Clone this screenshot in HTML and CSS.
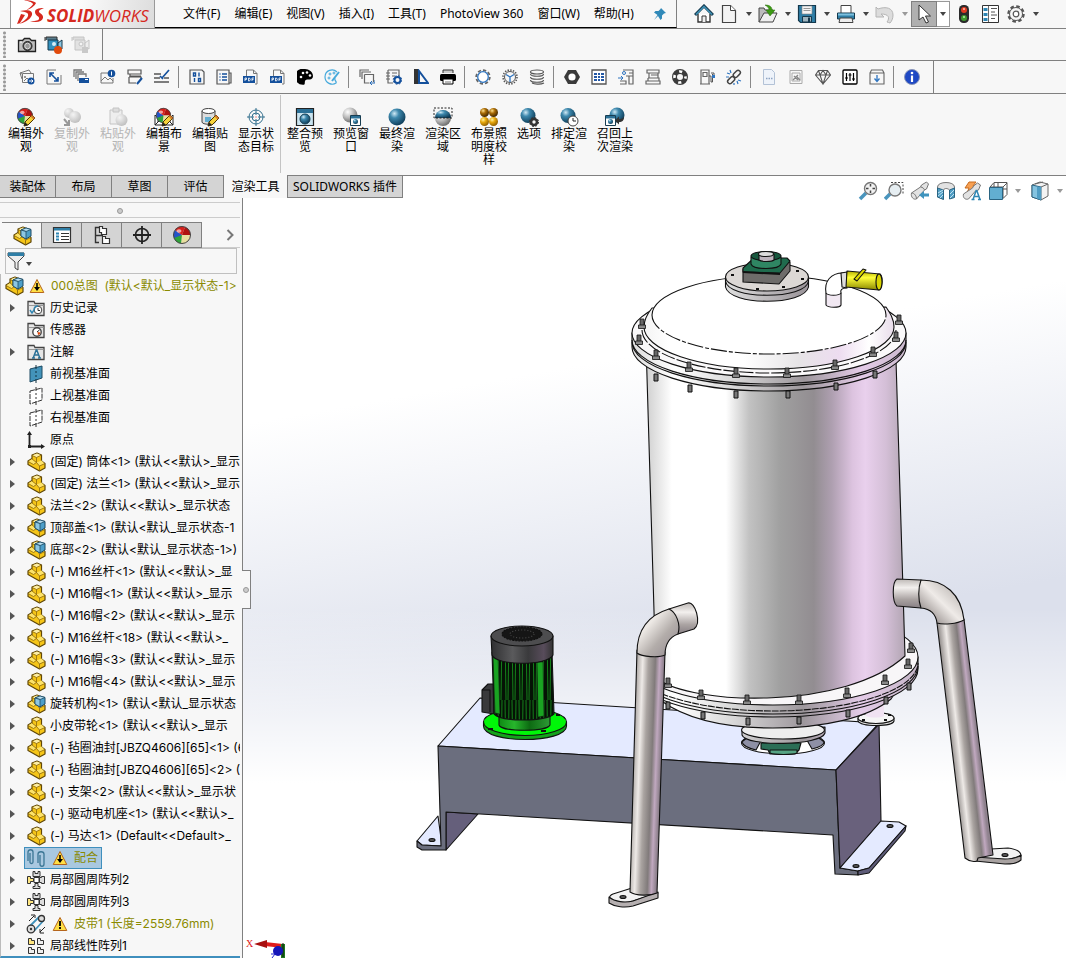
FILE: index.html
```html
<!DOCTYPE html>
<html lang="zh-CN">
<head>
  <meta charset="UTF-8">
  <meta name="viewport" content="width=device-width, initial-scale=1.0">
  <title>SOLIDWORKS - 000总图</title>
  <link rel="stylesheet" href="styles.css">
</head>
<body>

  <!-- shared icons -->
  <svg class="defs" aria-hidden="true">
    <defs>
      <radialGradient id="ballBlue" cx=".35" cy=".3" r=".75"><stop offset="0" stop-color="#cfe9f5"/><stop offset=".35" stop-color="#3d88ad"/><stop offset="1" stop-color="#0d3a55"/></radialGradient>
      <radialGradient id="ballGray" cx=".35" cy=".3" r=".75"><stop offset="0" stop-color="#fff"/><stop offset=".5" stop-color="#bbb"/><stop offset="1" stop-color="#666"/></radialGradient>
      <radialGradient id="ballPale" cx=".35" cy=".3" r=".75"><stop offset="0" stop-color="#f4f4f4"/><stop offset="1" stop-color="#bdbdbd"/></radialGradient>
      <radialGradient id="ballGold" cx=".35" cy=".3" r=".75"><stop offset="0" stop-color="#fff3a0"/><stop offset=".4" stop-color="#e8a90c"/><stop offset="1" stop-color="#8a5a00"/></radialGradient>
      <radialGradient id="ballBrown" cx=".35" cy=".3" r=".75"><stop offset="0" stop-color="#ffe08a"/><stop offset=".4" stop-color="#a86a04"/><stop offset="1" stop-color="#3a2200"/></radialGradient>
    </defs>
    <symbol id="part" viewBox="0 0 20 20">
      <path d="M2 9l4-2.500V3l5-2 4.500 2v6l3.500 2.500v4.500L13.500 19 2 12.500z" fill="#f5c518" stroke="#5f4708" stroke-width="1.200" stroke-linejoin="round"/>
      <path d="M6.500 3.200L11 1.500l4 1.700-4.500 2.300z" fill="#fdeea6"/>
      <path d="M10.500 10.500l5-2 3 3-5 2.500z" fill="#fde36a"/>
      <path d="M2.500 9.200l3.700-2.300 4.100 3.600-3 2z" fill="#fde36a"/>
      <path d="M6 3.500l4.500 2 5-2.500M10.500 5.500v5l3 3.500 5.500-2.500M13.500 14v4.500M6 7l4.500 3.500-3 2L2 9.500" fill="none" stroke="#8a670c" stroke-width=".8"/>
    </symbol>
    <symbol id="asm" viewBox="0 0 20 20">
      <use href="#part"/>
      <path d="M9 4l5-2 5 1.500v6.500l-5 3-5-3z" fill="#4d9fc9" stroke="#1c4a63"/>
      <path d="M9 4l5 1.500 5-2L14 2z" fill="#b9e0f2" stroke="#1c4a63" stroke-width=".8"/>
      <path d="M14 5.500V13l-5-3V4z" fill="#8cc7e3" stroke="#1c4a63" stroke-width=".8"/>
    </symbol>
    <symbol id="warn" viewBox="0 0 16 16">
      <path d="M8 1.500l6.800 13H1.200z" fill="#ffdf45" stroke="#b5651d" stroke-linejoin="round"/>
    </symbol>
    <symbol id="warndown" viewBox="0 0 16 16">
      <use href="#warn"/><path d="M8 5v7" stroke="#000" stroke-width="1.600"/><path d="M5 9h6l-3 4z" fill="#000"/>
    </symbol>
    <symbol id="folder" viewBox="0 0 20 20">
      <path d="M2 17.500V3.500h6l1 2h9v12z" fill="#e6e6e6" stroke="#444" stroke-width="1.300"/><path d="M3 7.500h14.500" stroke="#999"/>
    </symbol>
    <symbol id="plane" viewBox="0 0 20 20">
      <path d="M4 5l12-3v12l-12 4z" fill="#fff" stroke="#333" stroke-dasharray="5 1"/><path d="M10 1v4M10 7v2M10 11v2M10 15v4" stroke="#333"/>
    </symbol>
    <symbol id="circular" viewBox="0 0 20 20">
      <path d="M7 1.500h2v2h3v-2h2v5H7zM7 18.500h7v-2h-2v-3H9v3H7zM13.500 7.500h2v-1h3v7h-3v-1h-2z" fill="#ddd" stroke="#333"/>
      <path d="M1.500 6.500h3v2h3v3h-3v2h-3z" fill="#ffe680" stroke="#333"/><path d="M8 7.500h5v5H8z" fill="#fff" stroke="#333"/>
    </symbol>
    <symbol id="ball4" viewBox="0 0 20 20">
      <circle cx="10" cy="10" r="8.500" fill="#ddd"/><path d="M10 10L3 5A8.500 8.500 0 0 0 3 14.500z" fill="#2554c7"/><path d="M10 10L3 5A8.500 8.500 0 0 1 13 2z" fill="#d8201c"/>
      <path d="M10 10l3-8a8.500 8.500 0 0 1 5.500 8z" fill="#b01310"/><path d="M10 10h8.500a8.500 8.500 0 0 1-9.500 8.500z" fill="#e9dfa0"/><path d="M10 10l-1 8.500A8.500 8.500 0 0 1 2 13z" fill="#2fa33a"/>
      <circle cx="10" cy="10" r="8.500" fill="none" stroke="#444"/><ellipse cx="7" cy="6" rx="2.500" ry="1.800" fill="#fff" opacity=".6"/>
    </symbol>
    <symbol id="pencil" viewBox="0 0 20 20">
      <path d="M8 19l1-4 7-7 3 3-7 7z" fill="#f6d23a" stroke="#4a3200"/><path d="M8 19l1-4 3 3z" fill="#222"/><path d="M14.500 9.500l3 3 1.500-1.500-3-3z" fill="#d27a2c"/>
    </symbol>
    <symbol id="caret" viewBox="0 0 6 4"><path d="M0 0h6L3 4z" fill="currentColor"/></symbol>
    <symbol id="pdf" viewBox="0 0 16 16">
      <path d="M3.500 7V1h7l3.500 3.500V15h-2M10.500 1v3.500H14" fill="none" stroke="#777"/><path d="M0 7h12v7H0z" fill="#14509c"/>
      <path d="M2 12V9h1.500v1.500H2M5.500 9v3h1l.8-1.500L6.500 9zM9 12V9h2M9 10.500h1.500" fill="none" stroke="#fff" stroke-width=".8"/>
    </symbol>
  </svg>

  <header class="titlebar">
    <div class="brand">
      <svg class="ds" viewBox="0 0 30 27" aria-hidden="true">
        <path d="M8 0c5 0 10 1 12 3-1 3-6 6-11 8 5-3 8-6 8-7-1-2-5-3-9-4z" fill="#d6291f"/>
        <path d="M4 11c9-2 13 0 12 4-2 5-8 8-14 9 4-1 9-5 10-8 1-3-2-4-8-5zM5 14l4 1-5 8-3 1z" fill="#d6291f"/>
        <path d="M28 8c-6 0-9 1-9 4 0 4 5 4 4 7-1 2-5 2-9 2 6 2 12 1 13-3 1-4-5-5-4-7 0-1 3-2 5-3z" fill="#d6291f"/>
      </svg>
      <span class="logo"><b>SOLID</b>WORKS</span>
    </div>
    <nav class="menu">
      <a href="#">文件(F)</a>
      <a href="#">编辑(E)</a>
      <a href="#">视图(V)</a>
      <a href="#">插入(I)</a>
      <a href="#">工具(T)</a>
      <a href="#">PhotoView 360</a>
      <a href="#">窗口(W)</a>
      <a href="#">帮助(H)</a>
      <button class="pin" aria-label="固定"><svg class="s16" viewBox="0 0 16 16"><path d="M9 2l5 5-2 .5-2 2v3L8.500 14 6 10l-4 4 3.500-5L2 6.500 3.500 5h3l2-2z" fill="#3189b8"/></svg></button>
    </nav>
    <div class="quick">
      <button class="home" aria-label="主页"><svg class="s20" viewBox="0 0 20 20"><path d="M4 10v8h12v-8" fill="#fff" stroke="#333" stroke-width="1.400"/><path d="M1 11l9-9 9 9" fill="none" stroke="#173d52" stroke-width="3"/><path d="M2 10.500l8-8 8 8" fill="none" stroke="#3f95bb" stroke-width="1.300"/><path d="M8 18v-6h4v6" fill="#eee" stroke="#333"/></svg></button>
      <button aria-label="新建"><svg class="s20" viewBox="0 0 20 20"><path d="M3.500 1.500h8l5 5v12h-13z" fill="#f3f3f3" stroke="#444" stroke-width="1.200"/><path d="M11.500 1.500v5h5" fill="#fff" stroke="#444"/></svg></button>
      <button class="drop" aria-label="更多"><svg><use href="#caret"/></svg></button>
      <button aria-label="打开"><svg class="s20" viewBox="0 0 20 20"><path d="M1 18V4h5l1 2h8v3" fill="#bbb" stroke="#444"/><path d="M1 18L6 9h13l-4 9z" fill="#efefef" stroke="#444"/><path d="M7 1c5 0 7 2 7 5h3l-5 6-4-6h3c0-2-1-3-4-5z" fill="#3c9a14" stroke="#2a6e0c" stroke-width=".5"/></svg></button>
      <button class="drop" aria-label="更多"><svg><use href="#caret"/></svg></button>
      <button aria-label="保存"><svg class="s20" viewBox="0 0 20 20"><path d="M1.500 1.500h17v17h-15l-2-2z" fill="#2f7ea6" stroke="#14384c" stroke-width="1.200"/><path d="M5 2h10v8H5z" fill="#f4f4f4" stroke="#888" stroke-width=".6"/><path d="M6.500 4.500h7M6.500 6.500h7" stroke="#999"/><path d="M5.500 12.500h9V18h-9z" fill="#9fb4be" stroke="#14384c"/><path d="M11 13.500h2V18h-2z" fill="#14384c"/></svg></button>
      <button class="drop" aria-label="更多"><svg><use href="#caret"/></svg></button>
      <button aria-label="打印"><svg class="s20" viewBox="0 0 20 20"><path d="M5 9V1.500h10V9" fill="#fff" stroke="#444"/><path d="M1.500 9h17v6h-17z" fill="#2f7ea6" stroke="#14384c"/><path d="M2 9.500h16v2H2z" fill="#7cc0df"/><path d="M4 14h12l1 4.500H3z" fill="#eee" stroke="#444"/></svg></button>
      <button class="drop" aria-label="更多"><svg><use href="#caret"/></svg></button>
      <button aria-label="撤消"><svg class="s20" viewBox="0 0 20 20"><path d="M1 3l2 2c8-3 15-1 15 6 0 3-1 6-3 8-1 0-2-1-3-1 3-4 2-8-6-8l3 3H1z" fill="#dcdcdc" stroke="#b5b5b5"/></svg></button>
      <button class="drop pale" aria-label="更多"><svg><use href="#caret"/></svg></button>
      <button class="picked" aria-label="选择"><svg class="s20" viewBox="0 0 20 20"><path d="M5 1v15l4-3 3 6 2.500-1-3-6h5z" fill="#fff" stroke="#333"/></svg></button>
      <button class="drop boxed" aria-label="更多"><svg><use href="#caret"/></svg></button>
      <button class="light" aria-label="重建"><svg class="s20" viewBox="0 0 20 20"><rect x="5" y="1" width="10" height="18" rx="4.500" fill="#2b2b2b"/><circle cx="10" cy="6" r="3" fill="#e23b22"/><circle cx="10" cy="14" r="3" fill="#3f9a2e"/><circle cx="10" cy="5" r="1" fill="#ffc5b5"/><circle cx="10" cy="13" r="1" fill="#b9f0a8"/></svg></button>
      <button aria-label="文件属性"><svg class="s20" viewBox="0 0 20 20"><path d="M2.500 1.500h16v17h-16z" fill="#fff" stroke="#333"/><path d="M8.500 2v16" stroke="#666"/><path d="M3.500 4h4v3h-4zM3.500 9h4v3h-4zM3.500 14h4v3h-4z" fill="#2f86b3"/><path d="M11 4.500h6M11 8h4M11 11h6M11 14.500h4" stroke="#555"/></svg></button>
      <button aria-label="选项"><svg class="s20" viewBox="0 0 20 20"><circle cx="10" cy="10" r="7.500" fill="none" stroke="#555" stroke-width="2.500" stroke-dasharray="3.500 2.390"/><circle cx="10" cy="10" r="6.500" fill="#f7f7f7" stroke="#555"/><circle cx="10" cy="10" r="2.800" fill="#fff" stroke="#555" stroke-width="1.200"/></svg></button>
      <button class="drop" aria-label="更多"><svg><use href="#caret"/></svg></button>
    </div>
  </header>

  <div class="bar capture">
    <div class="tools">
      <span class="grip"></span>
      <button aria-label="捕获图像"><svg class="s20" viewBox="0 0 20 20"><path d="M1.500 5.500h4l2-2h5l2 2h4v11h-17z" fill="#bdbdbd" stroke="#222" stroke-width="1.300"/><circle cx="10.500" cy="11" r="4.500" fill="#555" stroke="#222"/><circle cx="10.500" cy="11" r="2.800" fill="#999" stroke="#ddd"/><path d="M3 7h2" stroke="#fff"/></svg></button>
      <button aria-label="录制视频"><svg class="s20" viewBox="0 0 20 20"><path d="M2 5V2h11v3M1 2v4" fill="#5a7d8d" stroke="#333"/><path d="M4 5h10v10H4z" fill="#3390bd" stroke="#14384c"/><path d="M14 8l4-3v9l-4-2z" fill="#8cc7e3" stroke="#14384c"/><circle cx="10" cy="9" r="2" fill="#d5ecf6"/><circle cx="14" cy="15" r="4" fill="#e04a0c"/></svg></button>
      <button aria-label="停止录制"><svg class="s20" viewBox="0 0 20 20"><path d="M2 5V2h11v3M1 2v4" fill="#ddd" stroke="#c4c4c4"/><path d="M4 5h10v10H4z" fill="#e2e2e2" stroke="#c4c4c4"/><path d="M14 8l4-3v9l-4-2z" fill="#eee" stroke="#c4c4c4"/><circle cx="10" cy="9" r="2" fill="#f4f4f4" stroke="#c4c4c4"/><path d="M11 12h6v6h-6z" fill="#c9c9c9"/></svg></button>
    </div>
  </div>

  <div class="bar plugin">
    <div class="tools">
      <span class="grip"></span>
      <button aria-label="图片"><svg class="s16" viewBox="0 0 16 16"><path d="M3 5L1 4l9-3 2 3M1 4l2 6M3.500 4.500h11v9h-11zM5 12l3-3 3 3" fill="none" stroke="#777"/><circle cx="6" cy="8" r="1" fill="#777"/><circle cx="12" cy="12" r="3.500" fill="#14509c"/><path d="M10 12h4M12.500 10.500L14 12l-1.500 1.500" fill="none" stroke="#fff"/></svg></button>
      <button aria-label="缩放"><svg class="s16" viewBox="0 0 16 16"><path d="M10 1H1v14h14V6" fill="none" stroke="#777"/><path d="M4 4l8 8M4 8V4h4M12 8v4H8" fill="none" stroke="#14509c" stroke-width="1.600"/></svg></button>
      <button aria-label="批量"><svg class="s16" viewBox="0 0 16 16"><path d="M1 8V1h8M3 10V3h8M5 12V5h8v3" fill="none" stroke="#777" stroke-width="1.300"/><path d="M6 9h10v5H6z" fill="#14509c"/><path d="M12 10.500h3" stroke="#fff"/></svg></button>
      <button aria-label="截图"><svg class="s16" viewBox="0 0 16 16"><path d="M8 4H1v10h12V9M1 12l4-4 3 3 2-2 3 3" fill="none" stroke="#777"/><circle cx="11.500" cy="4.500" r="3.800" fill="#14509c"/><path d="M11.500 2.500v4" stroke="#fff"/></svg></button>
      <button aria-label="编辑"><svg class="s16" viewBox="0 0 16 16"><path d="M1 1h13v4H1zM3 5v2h11M2 8h12v2M2 8v6h7" fill="none" stroke="#555" stroke-width="1.200"/><path d="M10 15l5-6" stroke="#14509c" stroke-width="2"/></svg></button>
      <button aria-label="公差"><svg class="s16" viewBox="0 0 16 16"><path d="M0 5h7M0 9h6M10 9h5M0 13h15" stroke="#555" stroke-width="1.300"/><path d="M8 9l7-8M6 7l3 3" stroke="#14509c" stroke-width="1.700"/></svg></button>
      <i class="sep"></i>
      <button aria-label="属性"><svg class="s16" viewBox="0 0 16 16"><path d="M1 1h12l2 2v12H1z" fill="none" stroke="#555" stroke-width="1.200"/><path d="M4.500 4h2v3h-2zM10 3.500v4M9.500 9.500h2v3h-2zM5.500 9v4" fill="none" stroke="#14509c" stroke-width="1.400"/></svg></button>
      <button aria-label="清单"><svg class="s16" viewBox="0 0 16 16"><path d="M1 1h12v14H1zM13 4h2v10h-2" fill="none" stroke="#555" stroke-width="1.200"/><path d="M3.500 5h1M3.500 8h1M3.500 11h1M6 5h5M6 8h5M6 11h5" stroke="#14509c" stroke-width="1.300"/></svg></button>
      <button aria-label="导出PDF"><svg class="s16"><use href="#pdf"/></svg></button>
      <button aria-label="批量PDF"><svg class="s16"><use href="#pdf"/></svg></button>
      <button aria-label="颜色"><svg class="s16" viewBox="0 0 16 16"><path d="M8 0a8 8 0 1 0-2 15.700c3 .3 1-3 2.500-4.500S16 12 16 7C16 3 12 0 8 0z" fill="#000"/><g fill="#f7f7f7"><circle cx="4" cy="8" r="1.300"/><circle cx="6" cy="4" r="1.300"/><circle cx="10" cy="3.500" r="1.300"/><circle cx="13" cy="6.500" r="1.300"/></g></svg></button>
      <button aria-label="调色"><svg class="s16" viewBox="0 0 16 16"><path d="M13 3C9-1 1 1 1 8c0 6 7 9 11 6 1-2-2-2-1-5" fill="none" stroke="#45a9dc" stroke-width="1.200"/><path d="M8 12l7-9" stroke="#45a9dc" stroke-width="2"/><g fill="none" stroke="#45a9dc"><circle cx="5" cy="9" r="1"/><circle cx="6" cy="5" r="1"/><circle cx="10" cy="4" r="1"/></g></svg></button>
      <i class="sep"></i>
      <button aria-label="复制"><svg class="s16" viewBox="0 0 16 16"><path d="M1 8V1h9M3 10V3h9M5.500 5.500h9V13M5.500 5.500V14h5" fill="none" stroke="#666" stroke-width="1.200"/><path d="M16 11v3h-5M13 12l-2 2 2 2" fill="none" stroke="#2a6cb5"/></svg></button>
      <button aria-label="设置"><svg class="s16" viewBox="0 0 16 16"><path d="M2 1h11v6M2 1v13h5M0 4h4M0 7h4M0 10h4M6 4h5M6 7h3" fill="none" stroke="#666" stroke-width="1.200"/><circle cx="11.500" cy="11" r="3" fill="none" stroke="#14509c" stroke-width="2"/><circle cx="11.500" cy="11" r="4.300" fill="none" stroke="#14509c" stroke-dasharray="1.700 1.700"/></svg></button>
      <button aria-label="测量"><svg class="s16" viewBox="0 0 16 16"><path d="M1 0h4v15H1z" fill="#333"/><path d="M6 2v12h9z" fill="none" stroke="#14509c" stroke-width="2"/></svg></button>
      <button aria-label="批量打印"><svg class="s16" viewBox="0 0 16 16"><path d="M3 4V1h10v3" fill="#ccc" stroke="#333"/><rect y="5" width="16" height="7" rx="1.500" fill="#000"/><path d="M3 10h10v5H3z" fill="#fff" stroke="#000"/><path d="M5 13h6" stroke="#777"/></svg></button>
      <i class="sep"></i>
      <button aria-label="齿轮"><svg class="s16" viewBox="0 0 16 16"><circle cx="8" cy="8" r="6.800" fill="none" stroke="#666" stroke-width="1.800" stroke-dasharray="3.300 2"/><circle cx="8" cy="8" r="5.300" fill="#fff" stroke="#2f75c0" stroke-width="1.300"/></svg></button>
      <button aria-label="链轮"><svg class="s16" viewBox="0 0 16 16"><circle cx="8" cy="8" r="7" fill="none" stroke="#555" stroke-width="1.600" stroke-dasharray="1.400 1.350"/><circle cx="8" cy="8" r="5.500" fill="none" stroke="#555"/><path d="M8 8v5M8 8L4 5.500M8 8l4-2.500" stroke="#2f75c0" stroke-width="1.300"/></svg></button>
      <button aria-label="弹簧"><svg class="s16" viewBox="0 0 16 16"><g fill="none" stroke="#555" stroke-width="1.200"><ellipse cx="8" cy="3" rx="6.500" ry="2"/><path d="M1.500 5c0 3 13 3 13 0M1.500 8c0 3 13 3 13 0M1.500 11c0 3 13 3 13 0M15 14c-4 2-10 1-12 0"/></g></svg></button>
      <i class="sep"></i>
      <button aria-label="螺母"><svg class="s16" viewBox="0 0 16 16"><path d="M4 1h8l4 7-4 7H4L0 8z" fill="#3b3b3b"/><circle cx="8" cy="8" r="3.600" fill="#fff"/></svg></button>
      <button aria-label="表格"><svg class="s16" viewBox="0 0 16 16"><path d="M1 1h14v14H1z" fill="#fff" stroke="#555" stroke-width="1.300"/><path d="M3 5h3M7 5h2M10 5h3M3 8h3M7 8h2M10 8h3M3 11h3M7 11h2M10 11h3" stroke="#2559a5" stroke-width="2"/></svg></button>
      <button aria-label="型材"><svg class="s16" viewBox="0 0 16 16"><path d="M5 1h10v14h-4V7H8M2 12h6v3H2M15 4h-4M15 7h-4" fill="none" stroke="#666" stroke-width="1.200"/><circle cx="6" cy="4" r="1.500" fill="none" stroke="#2f75c0"/><path d="M0 9h5M3 7l2 2-2 2" fill="none" stroke="#2f75c0"/></svg></button>
      <button aria-label="轴承座"><svg class="s16" viewBox="0 0 16 16"><path d="M2 1h12v3H2zM4 4v5M13 4v5M3 9h11v3M1 12h14v3H1zM3 9v3M6 6h7" fill="none" stroke="#666" stroke-width="1.200"/></svg></button>
      <button aria-label="帮助圈"><svg class="s16" viewBox="0 0 16 16"><circle cx="8" cy="8" r="5.500" fill="none" stroke="#3b3b3b" stroke-width="5"/><circle cx="8" cy="8" r="5.500" fill="none" stroke="#fff" stroke-width="2.600" stroke-dasharray="3.200 5.440" stroke-dashoffset="1.600"/></svg></button>
      <button aria-label="加注"><svg class="s16" viewBox="0 0 16 16"><path d="M2 15V1h8v14zM4 3.500h4v4H4zM1 15h10" fill="none" stroke="#666" stroke-width="1.200"/><path d="M10 7h2v6h1.500V5M12 4h3v4h-2" fill="none" stroke="#555"/><path d="M13 6h3v3h-3z" fill="#2f75c0"/></svg></button>
      <button aria-label="断开链接"><svg class="s16" viewBox="0 0 16 16"><g fill="none" stroke="#444" stroke-width="1.500"><rect x="7" y="2.500" width="8" height="4.500" rx="2.200" transform="rotate(-45 11 5)"/><rect x="1" y="9" width="8" height="4.500" rx="2.200" transform="rotate(-45 5 11)"/></g><path d="M4 1l1 3M1 4l3 1M0 8h3M15 12l-3-1M12 15l-1-3M8 16v-2" stroke="#2f75c0" stroke-width="1.200"/></svg></button>
      <i class="sep"></i>
      <button aria-label="文档"><svg class="s16" viewBox="0 0 16 16"><path d="M2.500.500h8l3 3v12h-11z" fill="#eef3fa" stroke="#b3c2d6"/><path d="M5 9.500h1.500M7.500 9.500H9M10 9.500h1.500" stroke="#8ea4c3" stroke-width="1.500"/></svg></button>
      <button aria-label="预览"><svg class="s16" viewBox="0 0 16 16"><path d="M2 1.500h12v13H2zM4 4h8v8H4z" fill="none" stroke="#aaa"/><path d="M5 11l5-5M6 7l4 4M9 8l3 3" stroke="#888" stroke-width="1.400"/></svg></button>
      <button aria-label="宝石"><svg class="s16" viewBox="0 0 16 16"><path d="M3.500 1.500h9L15.500 6 8 15 .5 6zM.5 6h15M3.500 1.500L5 6l3 9 3-9 1.500-4.500M5 6l3-4.500L11 6" fill="none" stroke="#555" stroke-width="1.100"/></svg></button>
      <button aria-label="参数"><svg class="s16" viewBox="0 0 16 16"><rect x="1" y="1" width="14" height="14" rx="1" fill="#fff" stroke="#000" stroke-width="1.300"/><path d="M4.500 4v8M8 4v8M11.500 4v8M3 9h3M6.500 6h3M10 10h3" stroke="#000" stroke-width="1.200"/></svg></button>
      <button aria-label="下载"><svg class="s16" viewBox="0 0 16 16"><path d="M1 4h14v11H1zM1 4l1.500-3h11L15 4" fill="none" stroke="#666" stroke-width="1.100"/><path d="M8 6v6M5.500 9.500L8 12.500l2.500-3" fill="none" stroke="#2f75c0" stroke-width="1.300"/></svg></button>
      <i class="sep"></i>
      <button aria-label="关于"><svg class="s16" viewBox="0 0 16 16"><circle cx="8" cy="8" r="7.500" fill="#1f49c4" stroke="#8a96b8"/><circle cx="8" cy="4" r="1.300" fill="#fff"/><path d="M8 6.500V13" stroke="#fff" stroke-width="2.200"/></svg></button>
    </div>
  </div>

  <div class="ribbon">
    <button><svg class="s20" viewBox="0 0 20 20"><use href="#ball4" width="18" height="18"/><use href="#pencil" width="20" height="20"/></svg>编辑外观</button>
    <button disabled><svg class="s20" viewBox="0 0 20 20"><circle cx="7" cy="6" r="5" fill="url(#ballPale)"/><circle cx="13" cy="10" r="6" fill="url(#ballPale)"/><path d="M2 12l5 6M7 13v5H2" fill="none" stroke="#999" stroke-width="2"/></svg>复制外观</button>
    <button disabled><svg class="s20" viewBox="0 0 20 20"><path d="M2 3h12v14H2z" fill="#eee" stroke="#c4c4c4"/><path d="M5 1h6v4H5z" fill="#ddd" stroke="#c4c4c4"/><circle cx="13.500" cy="13" r="6" fill="url(#ballPale)"/></svg>粘贴外观</button>
    <button><svg class="s20" viewBox="0 0 20 20"><path d="M1 18V8l3 3v4zM19 18V8l-3 3v4zM1 18l4-4h10l4 4z" fill="#fff" stroke="#222"/><use href="#ball4" x="1" width="17" height="17"/><use href="#pencil" width="20" height="20"/></svg>编辑布景</button>
    <button><svg class="s20" viewBox="0 0 20 20"><path d="M2 4v11c0 3 13 3 13 0V4" fill="#ddd" stroke="#444"/><ellipse cx="8.500" cy="4" rx="6.500" ry="2.500" fill="#fff" stroke="#444"/><path d="M5 10h6v5H5z" fill="#62aed1"/><use href="#pencil" width="20" height="20"/></svg>编辑贴图</button>
    <button><svg class="s20" viewBox="0 0 20 20"><g fill="none" stroke="#34708e"><circle cx="10" cy="10" r="7"/><circle cx="10" cy="10" r="4"/><path d="M10 1v7M10 12v7M1 10h7M12 10h7" /></g><path d="M9.500 9.500h1v1h-1z" fill="#e22"/></svg>显示状态目标</button>
    <i class="line"></i>
    <button><svg class="s20" viewBox="0 0 20 20"><path d="M1.500 1.500h17v17h-17z" fill="#c9e3ef" stroke="#222" stroke-width="1.200"/><path d="M2 2h16v4H2z" fill="#2b7096"/><circle cx="10" cy="12" r="5" fill="url(#ballBlue)" stroke="#173d52"/></svg>整合预览</button>
    <button><svg class="s20" viewBox="0 0 20 20"><circle cx="9" cy="8" r="7.500" fill="url(#ballGray)"/><path d="M9.500 8.500h10v10h-10z" fill="#fff" stroke="#173d52"/><path d="M10 9h9v2.500h-9z" fill="#2b7096"/><circle cx="14.500" cy="14.500" r="2.500" fill="url(#ballBlue)"/></svg>预览窗口</button>
    <button><svg class="s20" viewBox="0 0 20 20"><circle cx="10" cy="10" r="8.500" fill="url(#ballBlue)"/></svg>最终渲染</button>
    <button><svg class="s20" viewBox="0 0 20 20"><circle cx="10" cy="11" r="8" fill="url(#ballGray)"/><path d="M2 11a8 8 0 0 1 16 0z" fill="url(#ballBlue)"/><path d="M1 1h18v10H1z" fill="none" stroke="#222" stroke-dasharray="2 1.500"/></svg>渲染区域</button>
    <button><svg class="s20" viewBox="0 0 20 20"><circle cx="5.500" cy="5.500" r="4.500" fill="url(#ballBrown)"/><circle cx="14.500" cy="5.500" r="4.500" fill="url(#ballBrown)"/><circle cx="5.500" cy="14.500" r="4.500" fill="url(#ballGold)"/><circle cx="14.500" cy="14.500" r="4.500" fill="url(#ballGold)"/></svg>布景照明度校样</button>
    <button class="narrow"><svg class="s20" viewBox="0 0 20 20"><circle cx="9" cy="8.500" r="7.500" fill="url(#ballBlue)"/><circle cx="15" cy="15" r="3" fill="#f7f7f7" stroke="#333" stroke-width="2.600"/><circle cx="15" cy="15" r="4.500" fill="none" stroke="#333" stroke-dasharray="2 1.500"/></svg>选项</button>
    <button><svg class="s20" viewBox="0 0 20 20"><circle cx="9" cy="8.500" r="7.500" fill="url(#ballBlue)"/><circle cx="14" cy="14" r="5" fill="#fff" stroke="#444"/><path d="M14 11v3h3" fill="none" stroke="#222"/></svg>排定渲染</button>
    <button><svg class="s20" viewBox="0 0 20 20"><circle cx="12" cy="8" r="7.500" fill="url(#ballBlue)"/><path d="M.5 8.500h10v10H.5z" fill="#fff" stroke="#173d52"/><path d="M1 9h9v2.500H1z" fill="#2b7096"/><circle cx="5.500" cy="14.500" r="2.500" fill="url(#ballBlue)"/><path d="M19 10c0 4-2 5-5 5v2.500l-4-4 4-4V12c2 0 3 0 5-2z" fill="#333"/></svg>召回上次渲染</button>
  </div>

  <div class="tabrow">
    <div class="tabs">
      <button>装配体</button>
      <button>布局</button>
      <button>草图</button>
      <button>评估</button>
      <button class="current">渲染工具</button>
      <button class="wide">SOLIDWORKS 插件</button>
    </div>
    <div class="headsup">
      <button aria-label="整屏显示全图"><svg class="s20" viewBox="0 0 20 20"><path d="M2 18l6-6" stroke="#4a95bd" stroke-width="3.500"/><circle cx="12.500" cy="7.500" r="6" fill="#f1f1f1" stroke="#777" stroke-width="1.400"/><path d="M12.500 3v2.500M12.500 9.500V12M8 7.500h2.500M14.500 7.500H17" stroke="#444" stroke-width="1.500"/></svg></button>
      <button aria-label="局部放大"><svg class="s20" viewBox="0 0 20 20"><path d="M7 1.500h12v12" fill="none" stroke="#444" stroke-dasharray="2 1.500"/><path d="M1 18l5-5" stroke="#4a95bd" stroke-width="3.500"/><circle cx="11" cy="9" r="6" fill="#e6eef2" stroke="#777" stroke-width="1.400"/></svg></button>
      <button aria-label="上一视图"><svg class="s20" viewBox="0 0 20 20"><path d="M1.500 12l9-6 1-2 5-3 2 2-2 5-2 1-8 9c-3 1-6-2-5-6z" fill="#e2e2e2" stroke="#777"/><path d="M1.500 12c3 0 5 3 5 6M10.500 6c2 0 4 2 4 3" fill="none" stroke="#777"/><path d="M9 14l5-4v2.500h5v3h-5V18z" fill="#3f93bd"/></svg></button>
      <button aria-label="剖面视图"><svg class="s20" viewBox="0 0 20 20"><path d="M1.500 6c0-6 17-6 17 0v9l-5 2V9c-2-2-5-2-6 0v9l-6-2z" fill="#e2e2e2" stroke="#777"/><path d="M1.500 7l6 2v9.500l-6-2.500zM13.500 9l5-2v9.500l-5 1.500z" fill="#4f9dc4" stroke="#2a6482"/><path d="M2 12l5-3M2 15l5-4M4 17l3-3M14 13l4-4M14 17l4-4" stroke="#bfe2f2"/></svg></button>
      <button aria-label="动态注解视图"><svg class="s20" viewBox="0 0 20 20"><path d="M7 1h7l-3 4h3l-9 7 2-5H3z" fill="#f7a052" stroke="#c66a1c"/><path d="M1.500 13l9-6 1-2 4-3 3 2-2 5-3 1-7 8c-3 1-6-1-5-5z" fill="#e2e2e2" stroke="#777"/><path d="M9.500 18.500h3M16 18.500h3M11 18.500l3.200-9h.6l3.200 9M12.200 15.500h4.500" fill="none" stroke="#2f86b3" stroke-width="1.500"/></svg></button>
      <button aria-label="视图定向"><svg class="s20" viewBox="0 0 20 20"><path d="M6 1.500h13v12l-4 4V6H2z" fill="#fff" stroke="#555"/><path d="M15 6l4-4M10 2v8M6 2v4M19 8h-6" stroke="#555"/><path d="M1.500 6.500h13v12h-13z" fill="#62aed1" stroke="#2a6482"/></svg></button>
      <button class="drop pale" aria-label="更多"><svg><use href="#caret"/></svg></button>
      <button class="style" aria-label="显示样式"><svg class="s20" viewBox="0 0 20 20"><path d="M2 4l8-3 8 2v12l-7 4-9-3z" fill="#f3f3f3" stroke="#666"/><path d="M2 4l9 2v13l-9-3z" fill="#84c3e0" stroke="#2a6482"/><path d="M5 3l8-2M11 6l7-3" stroke="#666"/><path d="M7 5.500l4 .5v13l-4-1.500z" fill="#4f9dc4"/></svg></button>
      <button class="drop pale" aria-label="更多"><svg><use href="#caret"/></svg></button>
    </div>
  </div>

  <main>
    <aside>
      <div class="handle"><span></span></div>
      <div class="panetabs">
        <button class="current" aria-label="设计树"><svg class="s20"><use href="#asm"/></svg></button>
        <button aria-label="属性"><svg class="s20" viewBox="0 0 20 20"><path d="M1.500 2.500h17v15h-17z" fill="#fff" stroke="#333" stroke-width="1.200"/><path d="M2 3h16v2.500H2z" fill="#2f7ea6"/><path d="M4 8.500h3M4 11.500h3M4 14.500h3" stroke="#2f86b3" stroke-width="2"/><path d="M9 8.500h8M9 11.500h8M9 14.500h8" stroke="#333"/></svg></button>
        <button aria-label="配置"><svg class="s20" viewBox="0 0 20 20"><path d="M7 2.500H3.500v15H7M3.500 10.500H11" fill="none" stroke="#333" stroke-width="1.400"/><path d="M7.500 1.500h3v2h4v6h-5v-2h-2zM10.500 11.500h3v2h4v5h-7z" fill="#fff" stroke="#333" stroke-width="1.200"/></svg></button>
        <button aria-label="尺寸"><svg class="s20" viewBox="0 0 20 20"><circle cx="10" cy="10" r="6.500" fill="none" stroke="#222" stroke-width="1.600"/><path d="M10 1v18M1 10h18" stroke="#222" stroke-width="1.800"/></svg></button>
        <button aria-label="外观"><svg class="s20"><use href="#ball4"/></svg></button>
        <button class="next" aria-label="下一个"><svg viewBox="0 0 8 12"><path d="M1.500 1l5 5-5 5" fill="none" stroke="#777" stroke-width="2"/></svg></button>
      </div>
      <label class="filter">
        <svg class="s20" viewBox="0 0 20 20"><path d="M2 2h16v3l-6 6v8l-3-2v-6L2 5z" fill="#eee" stroke="#444"/><path d="M2 1.500h16v3.500H2z" fill="#2f7ea6"/></svg>
        <svg class="tri"><use href="#caret"/></svg>
        <input type="text" aria-label="过滤器">
      </label>
      <ul class="tree">
        <li class="root alert"><svg class="s20"><use href="#asm"/></svg><svg class="s16"><use href="#warndown"/></svg><span>000总图&nbsp; (默认&lt;默认_显示状态-1&gt;</span></li>
        <li class="more"><svg class="s20" viewBox="0 0 20 20"><use href="#folder"/><circle cx="12" cy="12" r="3.800" fill="#fff" stroke="#444"/><path d="M12 10v2.500h2" fill="none" stroke="#333"/><path d="M4 12l2 3 2-3c0-3 2-4 4-4" fill="none" stroke="#2f86b3" stroke-width="1.400"/></svg><span>历史记录</span></li>
        <li><svg class="s20" viewBox="0 0 20 20"><use href="#folder"/><circle cx="11" cy="12" r="4.200" fill="#fff" stroke="#444" stroke-width="1.400"/><path d="M11 12l2.500-2" stroke="#222"/><path d="M12 15a3 3 0 0 0 2.500-2.500L11.500 12z" fill="#e04a0c"/></svg><span>传感器</span></li>
        <li class="more"><svg class="s20" viewBox="0 0 20 20"><use href="#folder"/><path d="M6 16h3M12 16h3M7.200 16l3-8h.6l3 8M8.500 13h4" fill="none" stroke="#2b7096" stroke-width="1.500"/></svg><span>注解</span></li>
        <li><svg class="s20" viewBox="0 0 20 20"><path d="M4 5l12-3v12l-12 4z" fill="#4393ba" stroke="#1c4a63"/><path d="M10 1v4M10 7v2M10 11v2M10 15v4" stroke="#12303f"/></svg><span>前视基准面</span></li>
        <li><svg class="s20"><use href="#plane"/></svg><span>上视基准面</span></li>
        <li><svg class="s20"><use href="#plane"/></svg><span>右视基准面</span></li>
        <li><svg class="s20" viewBox="0 0 20 20"><path d="M3.500 3v13.500H17" fill="none" stroke="#222" stroke-width="1.800"/><path d="M1 5l2.500-4L6 5zM15 14l4 2.500-4 2.500zM2 15h3v3H2z" fill="#222"/></svg><span>原点</span></li>
        <li class="more"><svg class="s20"><use href="#part"/></svg><span>(固定) 筒体&lt;1&gt; (默认&lt;&lt;默认&gt;_显示</span></li>
        <li class="more"><svg class="s20"><use href="#part"/></svg><span>(固定) 法兰&lt;1&gt; (默认&lt;&lt;默认&gt;_显示</span></li>
        <li class="more"><svg class="s20"><use href="#part"/></svg><span>法兰&lt;2&gt; (默认&lt;&lt;默认&gt;_显示状态</span></li>
        <li class="more"><svg class="s20"><use href="#asm"/></svg><span>顶部盖&lt;1&gt; (默认&lt;默认_显示状态-1</span></li>
        <li class="more"><svg class="s20"><use href="#asm"/></svg><span>底部&lt;2&gt; (默认&lt;默认_显示状态-1&gt;)</span></li>
        <li class="more"><svg class="s20"><use href="#part"/></svg><span>(-) M16丝杆&lt;1&gt; (默认&lt;&lt;默认&gt;_显</span></li>
        <li class="more"><svg class="s20"><use href="#part"/></svg><span>(-) M16帽&lt;1&gt; (默认&lt;&lt;默认&gt;_显示</span></li>
        <li class="more"><svg class="s20"><use href="#part"/></svg><span>(-) M16帽&lt;2&gt; (默认&lt;&lt;默认&gt;_显示</span></li>
        <li class="more"><svg class="s20"><use href="#part"/></svg><span>(-) M16丝杆&lt;18&gt; (默认&lt;&lt;默认&gt;_</span></li>
        <li class="more"><svg class="s20"><use href="#part"/></svg><span>(-) M16帽&lt;3&gt; (默认&lt;&lt;默认&gt;_显示</span></li>
        <li class="more"><svg class="s20"><use href="#part"/></svg><span>(-) M16帽&lt;4&gt; (默认&lt;&lt;默认&gt;_显示</span></li>
        <li class="more"><svg class="s20"><use href="#asm"/></svg><span>旋转机构&lt;1&gt; (默认&lt;默认_显示状态</span></li>
        <li class="more"><svg class="s20"><use href="#part"/></svg><span>小皮带轮&lt;1&gt; (默认&lt;&lt;默认&gt;_显示</span></li>
        <li class="more"><svg class="s20"><use href="#part"/></svg><span>(-) 毡圈油封[JBZQ4606][65]&lt;1&gt; (6</span></li>
        <li class="more"><svg class="s20"><use href="#part"/></svg><span>(-) 毡圈油封[JBZQ4606][65]&lt;2&gt; (6</span></li>
        <li class="more"><svg class="s20"><use href="#part"/></svg><span>(-) 支架&lt;2&gt; (默认&lt;&lt;默认&gt;_显示状</span></li>
        <li class="more"><svg class="s20"><use href="#part"/></svg><span>(-) 驱动电机座&lt;1&gt; (默认&lt;&lt;默认&gt;_</span></li>
        <li class="more"><svg class="s20"><use href="#part"/></svg><span>(-) 马达&lt;1&gt; (Default&lt;&lt;Default&gt;_</span></li>
        <li class="more alert"><div class="selected"><svg class="s20" viewBox="0 0 20 20"><path d="M2 13V4c0-3 5-3 5 0v10c0 2-3 2-3 0V5M12 15V6c0-3 6-3 6 0v10c0 3-4 3-4 0V7" fill="none" stroke="#3b7695" stroke-width="1.300"/></svg><svg class="s16"><use href="#warndown"/></svg><span>配合</span></div></li>
        <li class="more"><svg class="s20"><use href="#circular"/></svg><span>局部圆周阵列2</span></li>
        <li class="more"><svg class="s20"><use href="#circular"/></svg><span>局部圆周阵列3</span></li>
        <li class="more alert"><svg class="s20" viewBox="0 0 20 20"><path d="M4 12L14 2M8 17l10-11" stroke="#3f93bd" stroke-width="1.800"/><circle cx="5" cy="15" r="3.800" fill="#ddd" stroke="#333" stroke-width="1.300"/><circle cx="15.500" cy="4.500" r="3" fill="#ddd" stroke="#333" stroke-width="1.300"/><circle cx="5" cy="15" r="1.200" fill="#333"/><path d="M3 7l5-5M5 1h4v3M19 13l-5 5M18 19h-4v-4" fill="none" stroke="#222"/></svg><svg class="s16" viewBox="0 0 16 16"><use href="#warn"/><path d="M8 5v5M8 11v2" stroke="#000" stroke-width="1.800"/></svg><span>皮带1 (长度=2559.76mm)</span></li>
        <li class="more"><svg class="s20" viewBox="0 0 20 20"><path d="M2.500 2.500h3v2h3v4h-6z" fill="#ffe680" stroke="#333"/><path d="M11.500 2.500h3v2h3v4h-6zM2.500 11.500h3v2h3v4h-6zM11.500 11.500h3v2h3v4h-6z" fill="#eee" stroke="#333"/></svg><span>局部线性阵列1</span></li>
      </ul>
      <button class="splitter" aria-label="折叠面板"><span></span></button>
    </aside>

    <section class="view">
      <svg class="model" viewBox="243 198 823 760" role="img" aria-label="000总图">
        <defs>
          <linearGradient id="body" gradientUnits="userSpaceOnUse" x1="646" y1="0" x2="904" y2="0">
            <stop offset="0" stop-color="#cfcfcf"/><stop offset=".1" stop-color="#fff"/><stop offset=".31" stop-color="#fff"/><stop offset=".4" stop-color="#c2c2c2"/><stop offset=".52" stop-color="#a0a0a0"/><stop offset=".65" stop-color="#928d91"/><stop offset=".72" stop-color="#ae9fb0"/><stop offset=".8" stop-color="#dcc3df"/><stop offset=".85" stop-color="#e9d0ed"/><stop offset=".93" stop-color="#d4bfd7"/><stop offset="1" stop-color="#b4a7b5"/>
          </linearGradient>
          <linearGradient id="rim" gradientUnits="userSpaceOnUse" x1="632" y1="0" x2="918" y2="0">
            <stop offset="0" stop-color="#ddd"/><stop offset=".15" stop-color="#fff"/><stop offset=".35" stop-color="#d9d9d9"/><stop offset=".6" stop-color="#9d979c"/><stop offset=".8" stop-color="#e3cbe7"/><stop offset="1" stop-color="#c6b6c8"/>
          </linearGradient>
          <linearGradient id="dome" gradientUnits="userSpaceOnUse" x1="644" y1="0" x2="894" y2="0">
            <stop offset="0" stop-color="#f4f4f4"/><stop offset=".1" stop-color="#fff"/><stop offset=".4" stop-color="#fff"/><stop offset=".62" stop-color="#e6e4e6"/><stop offset=".78" stop-color="#eddcf0"/><stop offset=".9" stop-color="#fff"/><stop offset="1" stop-color="#e8dcea"/>
          </linearGradient>
          <linearGradient id="legLeft" gradientUnits="userSpaceOnUse" x1="636" y1="655" x2="664" y2="656"><stop offset="0" stop-color="#a39e9b"/><stop offset=".25" stop-color="#eeeae7"/><stop offset=".45" stop-color="#aaa4a1"/><stop offset=".7" stop-color="#817b7b"/><stop offset=".85" stop-color="#c0a8bf"/><stop offset="1" stop-color="#8f828e"/></linearGradient>
          <linearGradient id="legRight" gradientUnits="userSpaceOnUse" x1="937" y1="623" x2="964" y2="620"><stop offset="0" stop-color="#8f8a88"/><stop offset=".3" stop-color="#eeeae7"/><stop offset=".5" stop-color="#aaa4a1"/><stop offset=".7" stop-color="#817b7b"/><stop offset=".85" stop-color="#c0a8bf"/><stop offset="1" stop-color="#8f828e"/></linearGradient>
          <linearGradient id="elbow" x1="0" y1="0" x2="1" y2="1"><stop offset="0" stop-color="#b5afad"/><stop offset=".3" stop-color="#eeeae6"/><stop offset=".6" stop-color="#b3adaa"/><stop offset="1" stop-color="#8f858d"/></linearGradient>
          <linearGradient id="elbowRight" x1="1" y1="0" x2="0" y2="1"><stop offset="0" stop-color="#a39d9b"/><stop offset=".25" stop-color="#c9c4c1"/><stop offset=".5" stop-color="#efebe8"/><stop offset=".8" stop-color="#a09997"/><stop offset="1" stop-color="#827b7b"/></linearGradient>
          <linearGradient id="stub" x1="0" y1="0" x2="0" y2="1"><stop offset="0" stop-color="#bdb8b5"/><stop offset=".3" stop-color="#f3f0ee"/><stop offset=".7" stop-color="#aaa3a2"/><stop offset="1" stop-color="#877f84"/></linearGradient>
          <linearGradient id="cap"><stop offset="0" stop-color="#2f2f31"/><stop offset=".35" stop-color="#5a5a5c"/><stop offset=".6" stop-color="#3a3a3c"/><stop offset=".85" stop-color="#584c5b"/><stop offset="1" stop-color="#333"/></linearGradient>
          <linearGradient id="green"><stop offset="0" stop-color="#0f8a14"/><stop offset=".3" stop-color="#27b52c"/><stop offset=".6" stop-color="#0d6b12"/><stop offset="1" stop-color="#2d9a35"/></linearGradient>
          <linearGradient id="yellow" x1="0" y1="0" x2="0" y2="1"><stop offset="0" stop-color="#b5b000"/><stop offset=".35" stop-color="#ffff3a"/><stop offset="1" stop-color="#8b8700"/></linearGradient>
          <pattern id="fins" width="7" height="70" patternUnits="userSpaceOnUse"><path d="M0 0h7v70H0z" fill="#051205"/><path d="M1 0l1 70M5 0l-1 70" stroke="#169a1e" stroke-width=".8"/></pattern>
          <clipPath id="rightOfLeg"><path d="M652 600h300v180H652z"/></clipPath>
          <g id="bolt"><path d="M-2 -6h4v7h-4z" fill="#666" stroke="#111" stroke-width=".8"/><path d="M-3.500 0h7v3.500h-7z" fill="#888" stroke="#111" stroke-width=".8"/></g>
          <g id="nut"><path d="M-2 0h4v7h-4z" fill="#777" stroke="#111"/></g>
        </defs>

        <g stroke="#111" stroke-width="1.100" stroke-linejoin="round">
          <!-- base -->
          <path d="M438 816l-21 25 5 4 20 1z" fill="#e4eaff"/>
          <path d="M446 812v38l32-36z" fill="#655f7b"/>
          <path d="M438 746l42-48 399 25-43 47z" fill="#e4eaff"/>
          <path d="M438 746l398 24 4 98 18 3v4l-23-1-2-39-387-23v38h-24l-5-3v-6l5 4 19 1z" fill="#6b6e7e"/>
          <path d="M836 770l43-46 2 97-41 47z" fill="#69617c"/>
          <path d="M840 868l41-47 18 1 7 4-37 42-11 3z" fill="#e4eaff"/>
          <path d="M906 826l-1 5-36 42-11 2v-4l11-3z" fill="#5d5b78"/>
          <ellipse cx="890" cy="826" rx="3" ry="1.500" fill="#555"/>
          <ellipse cx="856" cy="866" rx="3" ry="1.500" fill="#555"/>
          <ellipse cx="432" cy="840" rx="3" ry="1.500" fill="#555"/>

          <!-- motor -->
          <path d="M482 690l6-6h6v30l-12-2z" fill="#39393b"/>
          <path d="M482 690h8v22" fill="none"/>
          <path d="M483.500 722v4c0 18 83 18 83 0v-4z" fill="#14a31b"/>
          <ellipse cx="525" cy="722" rx="41.500" ry="13.500" fill="#00f608"/>
          <path d="M499 716v9c2 7 48 7 51 0v-9z" fill="url(#green)"/>
          <path d="M492 652l2 62c8 8 50 8 60 0l-2-62z" fill="url(#fins)"/>
          <path d="M493 656h5l2 58-5-1zM537 662h6l1 54-6 1z" fill="#1aa322" stroke-width=".5"/>
          <path d="M491 636l1 19c4 11 56 11 61 0v-19z" fill="url(#cap)"/>
          <ellipse cx="522" cy="636" rx="31" ry="10" fill="#4d4d4f"/>
          <ellipse cx="522" cy="634" rx="20" ry="7" fill="#151515" stroke="#111" stroke-dasharray="2 1"/>
          <ellipse cx="522" cy="634" rx="12" ry="4" fill="none" stroke="#4a4a4a" stroke-dasharray="1 2"/>
          <path d="M488 729h5M541 731h5M556 715h4" stroke-width="2"/>

          <!-- bottom outlet -->
          <ellipse cx="783" cy="743" rx="41.500" ry="11" fill="#fff"/>
          <path d="M742 742c4-5 14-7 22-7l-8 15c-8-2-13-4-14-8zM824 742c-4-5-14-7-20-7l8 14c8-2 12-4 12-7z" fill="#8e90a5"/>
          <path d="M761 743h40l-2 7-4 4h-25l-2-4-7-1z" fill="#2b6e56"/>
          <path d="M770 750h27v3c-5 2-22 2-27 0z" fill="#55a383"/>
          <path d="M742 731v4c4 12 79 11 83-2v-6z" fill="url(#rim)"/>
          <ellipse cx="783" cy="730" rx="41.500" ry="9" fill="#eee"/>
          <path d="M858 718v3c3 6 34 6 36 0v-3z" fill="#ddd"/>
          <ellipse cx="876" cy="718" rx="18" ry="5.500" fill="#f5f5f5"/>
          <path d="M866 702h18v14c-4 2-14 2-18 0z" fill="#f0e2f2" stroke="none"/>
          <path d="M862 720h3M884 720h3M888 715h3" stroke-width="2"/>

          <!-- lower shell and flange -->
          <g clip-path="url(#rightOfLeg)">
            <path d="M660 700c30 22 75 28 113 28 50 0 95-10 118-29l20-30H650z" fill="url(#rim)"/>
            <path d="M628 657v12a145 48 0 0 0 290 0v-12z" fill="url(#rim)"/>
            <path d="M628 663a145 48 0 0 0 290 0" fill="none" stroke-dasharray="7 1"/>
            <path d="M628 666a145 48 0 0 0 290 0" fill="none"/>
            <ellipse cx="773" cy="657" rx="145" ry="48" fill="#f8f6f8"/>
          </g>

          <!-- tank -->
          <path d="M646.500 360l9.500 318c36 28 190 32 249-22l-9-296z" fill="url(#body)"/>
          <path d="M632 333v14a137 44 0 0 0 274 0v-14z" fill="url(#rim)"/>
          <path d="M632 340a137 44 0 0 0 274 0M632 342a137 44 0 0 0 274 0" fill="none"/>
          <ellipse cx="769" cy="333" rx="137" ry="44" fill="#faf9fa"/>
          <path d="M642 330a127 43 0 0 0 254 0" fill="none" stroke-dasharray="14 2"/>
          <path d="M652 308c-4 5-8 12-8 19a125 42 0 0 0 250 0c0-8-4-14-8-20z" fill="url(#dome)"/>
          <ellipse cx="769" cy="315" rx="117" ry="39" fill="#fff" stroke="none"/>
          <path d="M652 315a117 39 0 0 1 234 0" fill="none"/>
          <path d="M652 315a117 39 0 0 0 234 0" fill="none" stroke-dasharray="16 2 4 2"/>

          <!-- top bearing -->
          <path d="M725.500 277v10c4 19 79 19 83 0v-10z" fill="url(#rim)"/>
          <path d="M725.500 281c2 19 81 19 83 0" fill="none"/>
          <ellipse cx="767" cy="277" rx="41.500" ry="14" fill="#dcd8d5"/>
          <path d="M731 275h3M801 279h3M796 271h3M756 289h3M782 287h3" stroke-width="1.800"/>
          <path d="M743 269v13l36 2 11-13v-9z" fill="#6e6c6a"/>
          <path d="M743 268l11-10 33 0 3 3-10 12-37-1z" fill="#1f6b4d"/>
          <path d="M743 272l37 2" stroke-width="2"/>
          <path d="M751 257v7c2 6 28 6 30 0v-7z" fill="#2f8663"/>
          <ellipse cx="766" cy="256" rx="15" ry="4.500" fill="#17583e"/>
          <path d="M759 254v6c2 2 13 2 15 0v-6z" fill="#bdb4bd"/>
          <ellipse cx="766" cy="254" rx="7.500" ry="2.500" fill="#ddd"/>

          <!-- valve -->
          <path d="M826 293v12c2 3 14 3 15 0v-12z" fill="#f1e8f2"/>
          <path d="M826 293c-2-12 5-20 17-20l3 15c-4 0-6 2-5 5-2 3-13 3-15 0z" fill="#fff"/>
          <path d="M841 273l6-1v16l-5-1z" fill="#ddd"/>
          <path d="M847 271l33 3c3 3 3 12-1 16l-33-3z" fill="url(#yellow)"/>
          <ellipse cx="879" cy="282" rx="3" ry="8" fill="#d8d400"/>
          <path d="M854 279l9-10 3 1-9 11z" fill="#dcd800"/>
        </g>

        <!-- bolts -->
        <g>
          <use href="#bolt" x="642" y="325"/><use href="#bolt" x="639" y="341"/><use href="#bolt" x="656" y="356"/><use href="#bolt" x="689" y="368"/><use href="#bolt" x="736" y="374"/><use href="#bolt" x="787" y="374"/><use href="#bolt" x="835" y="366"/><use href="#bolt" x="873" y="353"/><use href="#bolt" x="896" y="338"/><use href="#bolt" x="899" y="321"/>
          <use href="#nut" x="656" y="374"/><use href="#nut" x="690" y="385"/><use href="#nut" x="736" y="391"/><use href="#nut" x="788" y="391"/><use href="#nut" x="836" y="383"/><use href="#nut" x="875" y="371"/>
          <use href="#bolt" x="668" y="684"/><use href="#bolt" x="701" y="696"/><use href="#bolt" x="747" y="701"/><use href="#bolt" x="799" y="701"/><use href="#bolt" x="847" y="694"/><use href="#bolt" x="885" y="681"/><use href="#bolt" x="908" y="665"/><use href="#bolt" x="911" y="649"/>
          <use href="#nut" x="668" y="702"/><use href="#nut" x="703" y="712"/><use href="#nut" x="748" y="718"/><use href="#nut" x="799" y="717"/><use href="#nut" x="848" y="710"/><use href="#nut" x="886" y="697"/><use href="#nut" x="909" y="683"/>
        </g>

        <g stroke="#111" stroke-width="1.100" stroke-linejoin="round">
          <!-- left leg -->
          <path d="M632 888l-19 6c-5 2-4 6 0 7 6 2 14 2 20 0l25-8z" fill="#f3f3f3"/>
          <path d="M609 897v6c6 4 16 5 24 3l25-8v-6l-25 9c-8 2-18 1-24-4z" fill="#b5afb0"/>
          <path d="M637 650l-7 242c6 4 20 4 27 1l8-241z" fill="url(#legLeft)"/>
          <path d="M669 609l19-6c7-2 14 20 6 26l-16 5z" fill="url(#stub)"/>
          <path d="M637 653c0-24 12-38 32-44 7 3 12 15 9 25-8 3-13 10-13 21-6 3-23 2-28-2z" fill="url(#elbow)"/>
          <ellipse cx="623" cy="897" rx="3" ry="1.500" fill="#555"/>

          <!-- right leg -->
          <path d="M991 849l17-1c8 1 13 4 13 8l-15 4-30-1z" fill="#f3f3f3"/>
          <path d="M1021 855v5c-5 4-10 4-16 4l-30-3v-4l30 2c6 0 12-1 16-4z" fill="#a8a2a1"/>
          <path d="M937 623l28 235c5 4 9 4 12 3l1-3 15-3-29-236z" fill="url(#legRight)"/>
          <path d="M921 580l-24-1c-5 3-5 23 0 27l24 2z" fill="url(#stub)"/>
          <path d="M921 580c24 0 40 14 43 40-7 4-21 5-27 3-1-8-6-14-16-15-3-8-3-20 0-28z" fill="url(#elbowRight)"/>
          <ellipse cx="1005" cy="855" rx="3" ry="1.500" fill="#555"/>
        </g>

        <!-- axis triad -->
        <text x="246" y="947" class="axis">X</text>
        <path d="M265 942l18 2v4l-18-2z" fill="#e01b1b"/>
        <path d="M254 944l13-4v8z" fill="#a80f0f"/>
        <path d="M281 944h4v14h-4z" fill="#1f7a1f"/>
        <path d="M283 943v14" stroke="#111"/>
        <circle cx="278" cy="951" r="5" fill="#1515b8"/>
        <path d="M271 954h4l-3 4" fill="none" stroke="#22c"/>
      </svg>
    </section>
  </main>

</body>
</html>
```

FILE: styles.css
```css
* {
  box-sizing: border-box;
}
body {
  margin: 0;
  height: 100vh;
  display: flex;
  flex-direction: column;
  overflow: hidden;
  font-family: "Noto Sans", "Noto Sans CJK SC", sans-serif;
  font-size: 12px;
  line-height: 16px;
  color: #000;
  background: #f7f7f7;
}
button {
  margin: 0;
  padding: 0;
  border: 0;
  background: none;
  font: inherit;
  color: inherit;
}
svg {
  display: block;
  flex: none;
}
.defs {
  position: absolute;
  width: 0;
  height: 0;
}
.s16 {
  width: 16px;
  height: 16px;
}
.s20 {
  width: 20px;
  height: 20px;
}

/* title bar */
.titlebar {
  flex: none;
  display: flex;
  height: 29px;
  border-bottom: 1px solid #808080;
}
.brand {
  display: flex;
  width: 145px;
  margin-left: 10px;
  padding-left: 5px;
  border-left: 1px solid #999;
  border-right: 1px solid #999;
  background: linear-gradient(100deg, #fff 40%, #dcdcdc);
}
.ds {
  width: 30px;
  height: 27px;
}
.logo {
  margin: 6px 0 0 1px;
  font: italic 17px/20px "Open Sans", sans-serif;
  color: #d6291f;
}
.menu {
  display: flex;
  align-items: center;
  height: 28px;
  padding-left: 21px;
  border-bottom: 1px solid #000;
  border-right: 1px solid #808080;
  width: 522px;
}
.menu a {
  padding: 0 7px;
  color: #000;
  text-decoration: none;
  white-space: nowrap;
}
.pin {
  margin-left: auto;
  margin-right: 8px;
}
.quick {
  display: flex;
  align-items: center;
  height: 27px;
  padding-left: 15px;
}
.quick button,
.headsup button {
  display: flex;
  align-items: center;
  justify-content: center;
  width: 26px;
  height: 26px;
}
.quick .home {
  width: 24px;
}
.quick .drop,
.headsup .drop {
  width: 13px;
  color: #444;
}
.drop svg,
.tri {
  width: 6px;
  height: 4px;
}
.quick .pale,
.headsup .pale {
  color: #999;
}
.quick .picked {
  background: #b0b0b0;
  border: 1px solid #808080;
}
.quick .boxed {
  background: #fff;
  border: 1px solid #999;
  border-left: 0;
}
.quick .light {
  margin-left: 1px;
}

/* tool bars */
.bar {
  flex: none;
  display: flex;
  border-bottom: 1px solid #808080;
}
.capture {
  height: 32px;
}
.plugin {
  height: 33px;
}
.tools {
  display: flex;
  align-items: center;
  border-right: 1px solid #808080;
}
.capture .tools {
  width: 103px;
}
.plugin .tools {
  padding-right: 8px;
}
.tools button {
  display: flex;
  justify-content: center;
  width: 27px;
}
.grip {
  width: 3px;
  height: 27px;
  margin: 0 7px 0 3px;
  background: radial-gradient(circle, #999 1px, transparent 2px) 0 0 / 3px 4px;
}
.sep {
  width: 1px;
  height: 22px;
  margin: 0 4px 0 3px;
  background: #888;
}

/* ribbon */
.ribbon {
  flex: none;
  display: flex;
  height: 81px;
  padding-left: 3px;
}
.ribbon button {
  display: flex;
  flex-direction: column;
  align-items: center;
  width: 46px;
  padding-top: 13px;
  line-height: 13px;
  text-align: center;
}
.ribbon button:disabled {
  color: #b5b5b5;
}
.ribbon .narrow {
  width: 34px;
}
.line {
  width: 1px;
  height: 78px;
  margin: 1px;
  background: #c4c4c4;
}

.tabrow {
  flex: none;
  display: flex;
  justify-content: space-between;
  height: 23px;
  border-top: 1px solid #808080;
  background: #fff;
}
.tabs {
  display: flex;
}
.tabs button {
  width: 56px;
  border-right: 1px solid #808080;
  border-bottom: 1px solid #808080;
  background: #d4d4d4;
}
.tabs .current {
  width: 64px;
  margin-top: -1px;
  border-bottom: 0;
  background: #f7f7f7;
}
.tabs .wide {
  width: 115px;
}
.headsup {
  position: relative;
  display: flex;
  padding-top: 2px;
}
.headsup .style {
  margin-left: 3px;
}

main {
  flex: 1;
  display: flex;
  min-height: 0;
}
aside {
  position: relative;
  flex: none;
  display: flex;
  flex-direction: column;
  width: 243px;
  padding-right: 2px;
  border-right: 1px solid #808080;
}
.handle {
  flex: none;
  height: 16px;
  margin-top: 4px;
  padding-top: 5px;
  border-top: 1px solid #ccc;
  border-bottom: 1px solid #ccc;
}
.handle span,
.splitter span {
  display: block;
  width: 6px;
  height: 6px;
  margin: 0 auto;
  border: 1px solid #999;
  border-radius: 50%;
  background: #ccc;
}
.panetabs {
  flex: none;
  display: flex;
  margin: 4px 0 0 2px;
  height: 26px;
}
.panetabs button {
  display: flex;
  align-items: center;
  justify-content: center;
  width: 40px;
  border: 1px solid #808080;
  border-left: 0;
  background: #d4d4d4;
}
.panetabs .current {
  border-bottom: 0;
  background: none;
}
.panetabs .next {
  width: auto;
  flex: 1;
  padding-left: 17px;
  border: 0;
  border-bottom: 1px solid #ccc;
  background: none;
}
.next svg {
  width: 8px;
  height: 12px;
}
.filter {
  flex: none;
  display: flex;
  align-items: center;
  height: 26px;
  margin: 0 3px 0 5px;
  border: 1px solid #c0c0c0;
}
.tri {
  margin-top: 6px;
  color: #444;
}
.filter input {
  flex: 1;
  min-width: 0;
  border: 0;
  outline: 0;
  background: none;
  font: inherit;
}

/* feature tree */
.tree {
  flex: 1;
  min-height: 0;
  margin: 0;
  padding: 1px 0 0;
  list-style: none;
  overflow: hidden;
  font-family: Inter, "Noto Sans CJK SC", sans-serif;
  border-left: 1px solid #bbb;
  border-bottom: 2px solid #3f8fbd;
}
.tree li {
  display: flex;
  align-items: center;
  gap: 4px;
  height: 22px;
  padding-left: 25px;
  white-space: nowrap;
}
.tree .root {
  padding-left: 3px;
}
.tree .more::before {
  content: "";
  width: 0;
  margin: 0 7px 0 -16px;
  border: 4px solid transparent;
  border-left: 5px solid #555;
  border-right: 0;
}
.alert {
  color: #8a8a00;
}
.alert .s16 {
  margin: 0 2px;
}
.tree .root .s16 {
  margin: 0 2px 0 1px;
}
.selected {
  display: flex;
  align-items: center;
  gap: 4px;
  height: 22px;
  margin-left: -2px;
  padding: 0 3px 0 1px;
  border: 1px solid #3f8fbd;
  background: #a9c8e0;
}
.splitter {
  position: absolute;
  left: 242px;
  top: 372px;
  width: 9px;
  height: 39px;
  border: 1px solid #808080;
  border-left: 0;
  background: #f7f7f7;
  z-index: 1;
}

/* graphics area */
.view {
  flex: 1;
  min-width: 0;
  background:
    linear-gradient(to bottom, transparent 54%, #fff 77%),
    linear-gradient(170deg, #fff 25%, #dce0ec 58%);
}
.model {
  width: 100%;
  height: 100%;
}
.axis {
  font: 10px "Liberation Serif", serif;
  fill: #e01b1b;
}
```
